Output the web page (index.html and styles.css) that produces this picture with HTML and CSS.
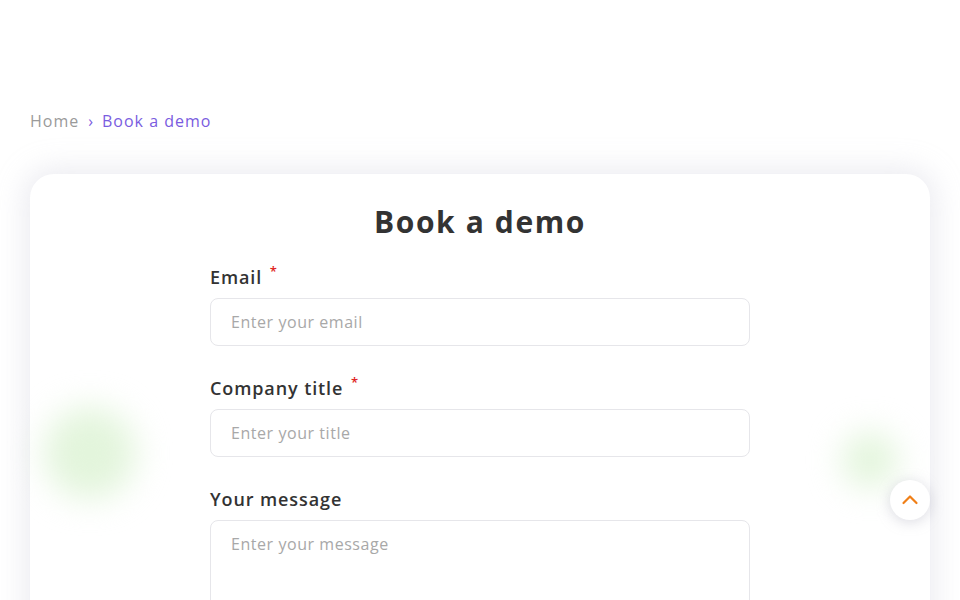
FILE: index.html
```html
<!DOCTYPE html>
<html lang="en">
<head>
<meta charset="utf-8">
<title>Book a demo</title>
<link rel="stylesheet" href="styles.css">
</head>
<body>
<header class="site-header"></header>
<main class="page">
  <nav class="breadcrumb">
    <a class="crumb" href="#">Home</a>
    <span class="sep">›</span>
    <span class="crumb current">Book a demo</span>
  </nav>
  <section class="card">
    <span class="blob blob-left"></span>
    <span class="blob blob-right"></span>
    <h1 class="title">Book a demo</h1>
    <form class="form">
      <div class="field">
        <label class="label" for="email">Email <span class="req">*</span></label>
        <input class="input" id="email" type="email" placeholder="Enter your email">
      </div>
      <div class="field">
        <label class="label" for="title">Company title <span class="req">*</span></label>
        <input class="input" id="title" type="text" placeholder="Enter your title">
      </div>
      <div class="field">
        <label class="label" for="msg">Your message</label>
        <textarea class="input textarea" id="msg" placeholder="Enter your message"></textarea>
      </div>
    </form>
  </section>
</main>
<button class="to-top" type="button" aria-label="Back to top">
  <svg width="20" height="20" viewBox="0 0 20 20" fill="none"><path d="M3.5 13 L10 6.5 L16.5 13" stroke="#f07f17" stroke-width="2.2" stroke-linecap="round" stroke-linejoin="round"/></svg>
</button>
</body>
</html>
```
FILE: styles.css
```css
* { box-sizing: border-box; }
html, body { margin: 0; padding: 0; }
body {
  font-family: "Open Sans", "Noto Sans", sans-serif;
  color: #333;
  background: #fff;
  height: 600px;
  overflow: hidden;
}
.site-header { height: 100px; }
.page { padding: 0 30px; }
.breadcrumb {
  display: flex;
  align-items: center;
  gap: 9px;
  font-size: 16px;
  line-height: 22px;
  height: 22px;
  margin-top: 10px;
  letter-spacing: 1px;
}
.crumb { color: #9a9a9a; text-decoration: none; }
.crumb.current { color: #7a5ce0; }
.sep { color: #7a5ce0; font-size: 16px; letter-spacing: 0; }
.card {
  position: relative;
  margin-top: 42px;
  background: #fff;
  border-radius: 24px;
  box-shadow: 0 0 28px 6px rgba(200, 200, 215, 0.35);
  padding: 28px 0 80px;
  min-height: 600px;
}
.blob {
  position: absolute;
  border-radius: 50%;
  background: #e3f5dc;
  filter: blur(16px);
}
.blob-left { left: 14px; top: 233px; width: 92px; height: 92px; }
.blob-right { left: 812px; top: 258px; width: 56px; height: 56px; }
.title {
  margin: 0;
  text-align: center;
  font-size: 30px;
  line-height: 40px;
  font-weight: 700;
  color: #333;
  letter-spacing: 1.6px;
}
.form {
  position: relative;
  width: 540px;
  margin: 23px auto 0;
  display: flex;
  flex-direction: column;
  gap: 30px;
}
.field { display: flex; flex-direction: column; gap: 9px; }
.label {
  font-size: 18px;
  line-height: 24px;
  height: 24px;
  font-weight: 600;
  color: #333;
  letter-spacing: 0.9px;
}
.req {
  position: relative;
  top: -8px;
  color: #e02424;
  font-size: 13px;
  margin-left: 2px;
}
.input {
  width: 100%;
  height: 48px;
  border: 1px solid #e6e6ea;
  border-radius: 8px;
  padding: 0 20px;
  font-family: inherit;
  font-size: 16px;
  letter-spacing: 0.55px;
  color: #333;
  background: #fff;
  outline: none;
}
.input::placeholder { color: #a8a8a8; font-weight: 400; }
.textarea { height: 140px; padding-top: 12px; resize: none; }
.to-top {
  position: fixed;
  right: 30px;
  bottom: 80px;
  width: 40px;
  height: 40px;
  border-radius: 50%;
  border: none;
  background: #fff;
  box-shadow: 0 2px 14px rgba(150, 150, 170, 0.35);
  display: flex;
  align-items: center;
  justify-content: center;
  padding: 0;
  cursor: pointer;
}
```
